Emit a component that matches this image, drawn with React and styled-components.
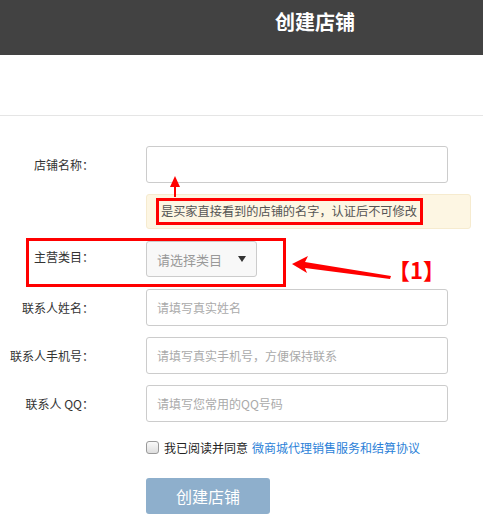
import React from "react";
import styled, { createGlobalStyle } from "styled-components";

const Global = createGlobalStyle`
  html, body { margin: 0; padding: 0; background: #fff; }
  body { font-family: "Noto Sans CJK SC", "Noto Sans", sans-serif; color: #333; }
`;

const Page = styled.div`
  position: relative;
  width: 483px;
  height: 527px;
  overflow: hidden;
`;

const Header = styled.header`
  height: 55px;
  background: #424242;
  display: flex;
  align-items: flex-start;
  padding-left: 275px;
  box-sizing: border-box;
`;

const Title = styled.h1`
  margin: 0;
  font-size: 20px;
  font-weight: 700;
  color: #fff;
  line-height: 44px;
`;

const Spacer = styled.div`
  height: 60px;
  border-bottom: 1px solid #e5e5e5;
`;

const Form = styled.form`
  display: flex;
  flex-direction: column;
  padding-top: 30px;
`;

const Row = styled.div`
  position: relative;
  display: flex;
  align-items: center;
  margin-top: ${(p) => p.$mt || 0}px;
`;

const Label = styled.label`
  width: 94px;
  flex: none;
  text-align: right;
  font-size: 12px;
  color: #333;
  margin-right: 52px;
  white-space: nowrap;
  transform: translateY(${(p) => p.$dy || 0}px);
`;

const Field = styled.div`
  margin-left: 146px;
  display: flex;
  align-items: center;
`;

const Input = styled.input`
  width: 302px;
  height: 37px;
  box-sizing: border-box;
  border: 1px solid #ccc;
  border-radius: 3px;
  padding: 0 10px;
  font-family: inherit;
  font-size: 12px;
  color: #333;
  outline: none;
  &::placeholder { color: #aaa; }
`;

const Hint = styled.div`
  width: 325px;
  height: 35px;
  box-sizing: border-box;
  background: #fdf6e3;
  border: 1px solid #f6ebcf;
  border-radius: 3px;
  display: flex;
  align-items: center;
  padding-left: 9px;
`;

const HintText = styled.span`
  border: 3px solid #f00;
  padding: 1px 3px 1px 2px;
  font-size: 12.2px;
  color: #555;
  line-height: 19px;
  white-space: nowrap;
`;

const Select = styled.div`
  width: 111px;
  height: 36px;
  box-sizing: border-box;
  background: #f8f8f8;
  border: 1px solid #ccc;
  border-radius: 3px;
  display: flex;
  align-items: center;
  justify-content: space-between;
  padding: 0 10px 0 10px;
  font-size: 13px;
  color: #999;
`;

const Caret = styled.span`
  width: 0;
  height: 0;
  border-left: 4.5px solid transparent;
  border-right: 4.5px solid transparent;
  border-top: 6px solid #333;
`;

const Highlight = styled.div`
  position: absolute;
  left: 26px;
  top: -3px;
  width: 260px;
  height: 49px;
  box-sizing: border-box;
  border: 3px solid #f00;
  pointer-events: none;
`;

const Agree = styled.div`
  margin-left: 146px;
  display: flex;
  align-items: center;
  font-size: 12px;
  color: #222;
  white-space: nowrap;
`;

const Box = styled.span`
  width: 11px;
  height: 11px;
  border: 1px solid #9a9a9a;
  border-radius: 3px;
  background: linear-gradient(#fafafa, #dedede);
  margin-right: 5px;
`;

const Link = styled.a`
  color: #2b7fd8;
  margin-left: 4px;
  text-decoration: none;
`;

const Button = styled.button`
  margin-left: 146px;
  width: 124px;
  height: 36px;
  border: none;
  border-radius: 3px;
  background: #8eafcc;
  color: #fff;
  font-family: inherit;
  font-size: 16px;
`;

const Tag = styled.span`
  position: absolute;
  left: 388px;
  top: 254px;
  color: #f00;
  font-size: 22px;
  font-weight: 700;
  line-height: 30px;
`;

const Overlay = styled.svg`
  position: absolute;
  left: 0;
  top: 0;
  pointer-events: none;
`;

export default function App() {
  return (
    <Page>
      <Global />
      <Header>
        <Title>创建店铺</Title>
      </Header>
      <Spacer />
      <Form onSubmit={(e) => e.preventDefault()}>
        <Row>
          <Label>店铺名称：</Label>
          <Input />
        </Row>
        <Row $mt={11}>
          <Field>
            <Hint>
              <HintText>是买家直接看到的店铺的名字，认证后不可修改</HintText>
            </Hint>
          </Field>
        </Row>
        <Row $mt={12}>
          <Label $dy={-3}>主营类目：</Label>
          <Select>
            请选择类目
            <Caret />
          </Select>
          <Highlight />
        </Row>
        <Row $mt={12}>
          <Label>联系人姓名：</Label>
          <Input placeholder="请填写真实姓名" />
        </Row>
        <Row $mt={11}>
          <Label>联系人手机号：</Label>
          <Input placeholder="请填写真实手机号，方便保持联系" />
        </Row>
        <Row $mt={11}>
          <Label>联系人 QQ：</Label>
          <Input placeholder="请填写您常用的QQ号码" />
        </Row>
        <Row $mt={17}>
          <Agree>
            <Box />
            我已阅读并同意
            <Link href="#">微商城代理销售服务和结算协议</Link>
          </Agree>
        </Row>
        <Row $mt={22}>
          <Button type="submit">创建店铺</Button>
        </Row>
      </Form>
      <Tag>【1】</Tag>
      <Overlay width="483" height="527" viewBox="0 0 483 527">
        <polygon points="175,176 180,187 176,187 176,197 174,197 174,187 170,187" fill="#f00" />
        <polygon points="292,264 308,256 305,262 391,276 390,279 305,268 307,273" fill="#f00" />
      </Overlay>
    </Page>
  );
}
